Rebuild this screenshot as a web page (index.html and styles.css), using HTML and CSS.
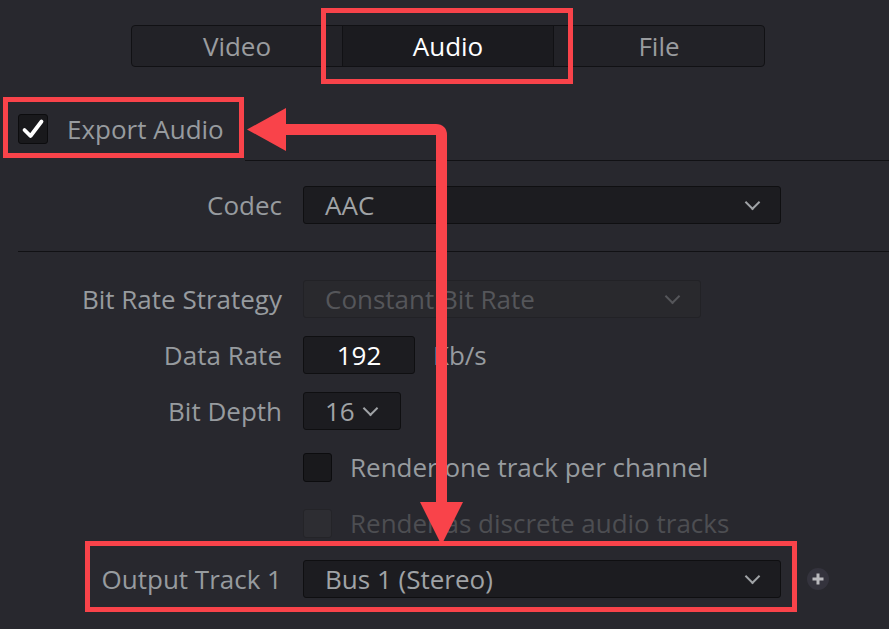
FILE: index.html
```html
<!DOCTYPE html>
<html lang="en">
  <head>
    <meta charset="UTF-8" />
    <meta name="viewport" content="width=device-width, initial-scale=1.0" />
    <title>Render Settings - Audio</title>
    <link rel="stylesheet" href="styles.css">
  </head>
  <body>
    <div class="panel">
      <div class="tabs">
        <div class="tab">Video</div>
        <div class="tab active">Audio</div>
        <div class="tab">File</div>
      </div>

      <div class="export-row">
        <span class="check checked">
          <svg viewBox="0 0 24 24" width="24" height="24"><path d="M3.5 13 L9.5 19 L20.5 4.5" fill="none" stroke="#fff" stroke-width="3.8" stroke-linecap="round" stroke-linejoin="round"/></svg>
        </span>
        <span class="export-label">Export Audio</span>
      </div>
      <div class="rule rule-short"></div>

      <div class="form form-codec">
        <label class="label">Codec</label>
        <div class="select wide"><span>AAC</span><i class="chev"></i></div>
      </div>
      <div class="rule"></div>

      <div class="form">
        <label class="label">Bit Rate Strategy</label>
        <div class="select mid disabled"><span>Constant Bit Rate</span><i class="chev"></i></div>

        <label class="label">Data Rate</label>
        <div class="inline">
          <div class="field">192</div>
          <span class="unit">Kb/s</span>
        </div>

        <label class="label">Bit Depth</label>
        <div class="select small"><span>16</span><i class="chev"></i></div>

        <span></span>
        <div class="check-row"><span class="check"></span><span>Render one track per channel</span></div>

        <span></span>
        <div class="check-row disabled"><span class="check"></span><span>Render as discrete audio tracks</span></div>

        <label class="label">Output Track 1</label>
        <div class="inline">
          <div class="select wide"><span>Bus 1 (Stereo)</span><i class="chev"></i></div>
          <span class="add">
            <svg viewBox="0 0 22 22" width="22" height="22"><circle cx="11" cy="11" r="11" fill="#34333d"/><path d="M11 5.5 V16.5 M5.5 11 H16.5" stroke="#b9b9bd" stroke-width="3"/></svg>
          </span>
        </div>
      </div>
    </div>

    <!-- tutorial markup drawn over the panel -->
    <svg class="annotations" width="889" height="629" viewBox="0 0 889 629">
      <g fill="none" stroke="#f9434a" stroke-width="5">
        <rect x="323.5" y="10.5" width="247" height="71" />
        <rect x="5.5" y="99.5" width="236" height="56" />
        <rect x="87.5" y="543.5" width="707" height="66" />
      </g>
      <path d="M284 129.5 H436 Q441.5 129.5 441.5 135 V504" fill="none" stroke="#f9434a" stroke-width="11" />
      <polygon points="247,129.5 286,108 286,151" fill="#f9434a" />
      <polygon points="441.5,545 420,502 463,502" fill="#f9434a" />
    </svg>
  </body>
</html>
```

FILE: styles.css
```css
body {
  margin: 0;
  width: 889px;
  height: 629px;
  overflow: hidden;
  position: relative;
  background: #28282e;
  font-family: "Open Sans", "Noto Sans", sans-serif;
  font-size: 26px;
  color: #979b9f;
}

.panel {
  padding-top: 25px;
}

.tabs {
  display: flex;
  width: 634px;
  height: 42px;
  margin-left: 131px;
  box-sizing: border-box;
  border: 1px solid #111114;
  border-radius: 4px;
  background: #222227;
  overflow: hidden;
}

.tab {
  flex: 1;
  display: flex;
  align-items: center;
  justify-content: center;
  color: #9a9c9f;
}

.tab + .tab {
  border-left: 1px solid #111114;
}

.tab.active {
  background: #1b1b1f;
  color: #ffffff;
}

.export-row {
  display: flex;
  align-items: center;
  gap: 19px;
  height: 40px;
  margin-top: 42px;
  padding-left: 18px;
}

.check {
  width: 30px;
  height: 30px;
  box-sizing: border-box;
  border: 1px solid #0c0c0e;
  border-radius: 3px;
  background: #19191c;
  display: flex;
  align-items: center;
  justify-content: center;
  flex: none;
}

.rule {
  height: 1px;
  background: #111114;
  margin-left: 18px;
}

.rule-short {
  margin-top: 11px;
  margin-left: 245px;
}

.form {
  display: grid;
  grid-template-columns: 282px 1fr;
  column-gap: 21px;
  row-gap: 18px;
  grid-auto-rows: 38px;
  margin-top: 28px;
}

.form-codec {
  margin-top: 25px;
  margin-bottom: 27px;
}

.label {
  text-align: right;
  align-self: center;
  white-space: nowrap;
}

.select, .field {
  height: 38px;
  box-sizing: border-box;
  border: 1px solid #0f0f11;
  border-radius: 3px;
  background: #1c1c20;
  display: flex;
  align-items: center;
}

.select {
  justify-content: space-between;
  padding: 0 22px 0 21px;
  color: #a0a3a6;
}

.select.wide {
  width: 478px;
}

.select.mid {
  width: 398px;
}

.select.small {
  width: 98px;
  justify-content: flex-start;
  gap: 10px;
  padding-left: 21px;
}

.select.disabled {
  background: #29292d;
  border-color: #222226;
  color: #55565a;
}

.chev {
  width: 9px;
  height: 9px;
  border-right: 2px solid currentColor;
  border-bottom: 2px solid currentColor;
  transform: translateY(-3px) rotate(45deg);
}

.field {
  width: 112px;
  justify-content: center;
  color: #ffffff;
}

.inline {
  display: flex;
  align-items: center;
}

.unit {
  margin-left: 18px;
}

.check-row {
  display: flex;
  align-items: center;
  gap: 18px;
}

.check-row .check {
  width: 29px;
  height: 29px;
}

.check-row.disabled {
  color: #4d4e52;
}

.check-row.disabled .check {
  background: #2d2d32;
  border-color: #242428;
}

.add {
  display: flex;
  margin-left: 26px;
}

.annotations {
  position: absolute;
  top: 0;
  left: 0;
  pointer-events: none;
}
```
